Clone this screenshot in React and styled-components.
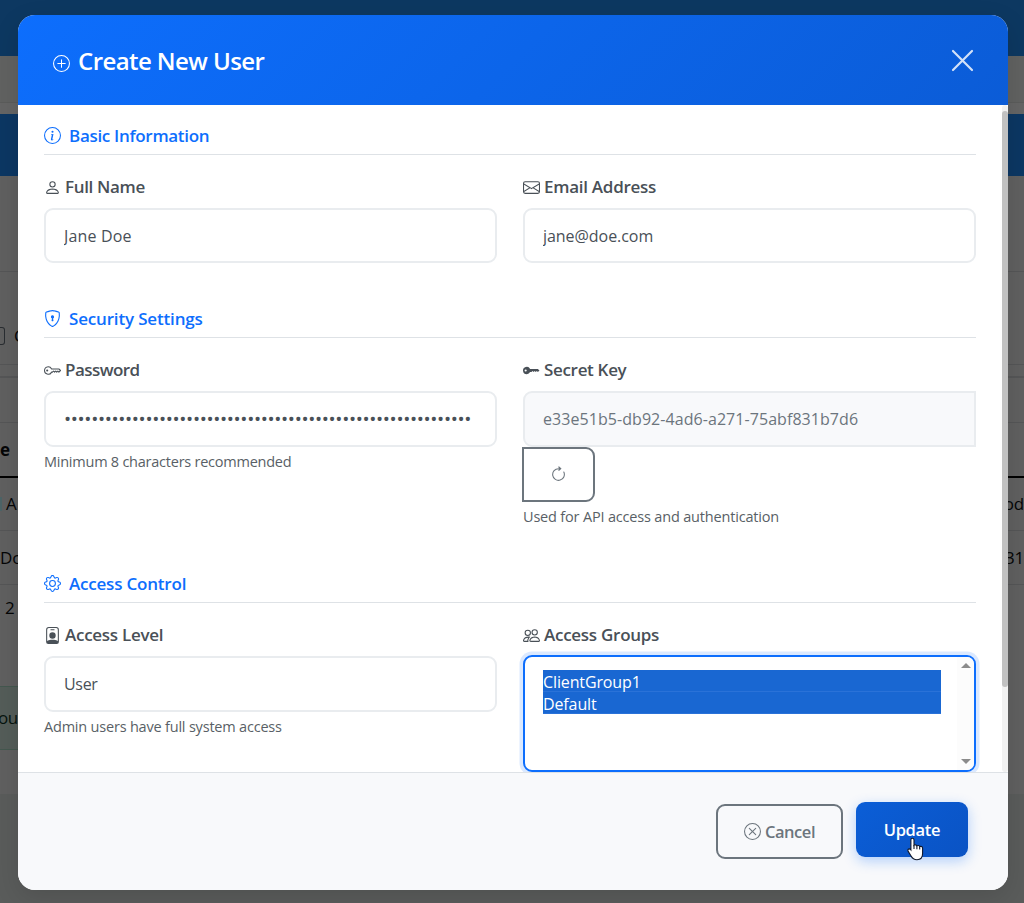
import React from "react";
import styled, { createGlobalStyle, css } from "styled-components";
import {
  BsArrowClockwise,
  BsEnvelope,
  BsGear,
  BsInfoCircle,
  BsKey,
  BsKeyFill,
  BsPeople,
  BsPerson,
  BsPersonBadge,
  BsPlusCircle,
  BsShieldLock,
  BsXCircle,
} from "react-icons/bs";

const GlobalStyle = createGlobalStyle`
  * { box-sizing: border-box; }
  body {
    margin: 0;
    overflow: hidden;
    font-family: "Open Sans", "Noto Sans", sans-serif;
    font-size: 16px;
    color: #495057;
  }
`;

const Screen = styled.div`
  position: relative;
  width: 1024px;
  height: 903px;
  overflow: hidden;
  background: #5a5c5b;
`;

const Page = styled.div`
  display: flex;
  flex-direction: column;
`;

const Band = styled.div`
  display: flex;
  justify-content: space-between;
  align-items: center;
  height: ${(p) => p.$h}px;
  padding-top: ${(p) => p.$drop || 0}px;
  padding-bottom: ${(p) => p.$lift || 0}px;
  background: ${(p) => p.$bg || "#606060"};
  border-bottom: ${(p) => p.$line || 0}px solid ${(p) => p.$lineColor || "#555657"};
  color: #050607;
  font-size: 17px;
  line-height: 22px;
  white-space: nowrap;
`;

const PageCell = styled.span`
  display: flex;
  justify-content: ${(p) => (p.$end ? "flex-end" : "flex-start")};
  width: 18px;
  padding-left: ${(p) => p.$indent || 0}px;
  font-weight: ${(p) => (p.$bold ? 700 : 400)};
  letter-spacing: -0.2px;
`;

const CheckCell = styled.span`
  display: flex;
  align-items: center;
  gap: 9px;
`;

const CheckEdge = styled.span`
  width: 5px;
  height: 18px;
  border: 1px solid #292d31;
  border-left: 0;
  border-radius: 0 3px 3px 0;
`;

const TagRow = styled.span`
  display: flex;
  align-items: center;
  gap: 4px;
`;

const TagEdge = styled.span`
  width: 2px;
  height: 14px;
  background: #4c6467;
`;

const Notice = styled.div`
  display: flex;
  align-items: center;
  width: 60px;
  height: 64px;
  border: solid #44584f;
  border-width: 1px 0;
  background: #545d59;
  color: #06140e;
  letter-spacing: -0.6px;
  text-indent: -2px;
`;

const Dialog = styled.div`
  position: absolute;
  left: 18px;
  top: 15px;
  display: flex;
  flex-direction: column;
  width: 990px;
  height: 875px;
  overflow: hidden;
  border-radius: 17px;
  background: #fff;
  box-shadow: 0 8px 26px rgba(0, 0, 0, 0.12);
`;

const Header = styled.header`
  display: flex;
  align-items: center;
  justify-content: space-between;
  flex: none;
  height: 90px;
  padding: 0 34px 0 35px;
  background: linear-gradient(135deg, #0d6efd 0%, #0b5cd7 100%);
  color: #fff;
`;

const Title = styled.h1`
  display: flex;
  align-items: center;
  gap: 8px;
  margin: 0;
  padding-top: 2px;
  font-size: 24px;
  line-height: 32px;
  font-weight: 600;
  letter-spacing: -0.58px;

  svg {
    width: 17px;
    height: 17px;
    margin-top: 5px;
  }
`;

const CloseButton = styled.button`
  display: flex;
  padding: 0;
  border: 0;
  background: none;
  color: #fff;
  opacity: 0.82;
`;

const Body = styled.div`
  display: flex;
  height: 667px;
  flex: none;
  overflow: hidden;
`;

const Form = styled.div`
  flex: 1;
  padding: 18px 26px 0;
`;

const ScrollTrack = styled.div`
  width: 6px;
  padding-top: 6px;
  border-radius: 4px;
  background: #f1f1f1;
`;

const ScrollThumb = styled.div`
  height: 576px;
  border-radius: 4px;
  background: #c1c1c1;
`;

const Section = styled.section`
  margin-bottom: 43px;
`;

const SectionTitle = styled.h2`
  display: flex;
  align-items: center;
  gap: 8px;
  height: 32px;
  margin: 0 0 20px;
  padding-bottom: 6px;
  border-bottom: 1px solid #dee2e6;
  color: #0d6efd;
  font-size: 17px;
  line-height: 24px;
  font-weight: 600;
  letter-spacing: ${(p) => p.$track || 0}px;

  svg {
    width: 17px;
    height: 17px;
  }
`;

const Columns = styled.div`
  display: grid;
  grid-template-columns: 1fr 1fr;
  gap: 26px;
`;

const Field = styled.div`
  display: flex;
  flex-direction: column;
  min-width: 0;
`;

const Label = styled.label`
  display: flex;
  align-items: center;
  gap: 4px;
  height: 24px;
  margin-bottom: 9px;
  font-size: 17px;
  line-height: 24px;
  font-weight: 600;
  white-space: nowrap;
  letter-spacing: ${(p) => p.$track || -0.27}px;

  svg {
    width: 17px;
    height: 17px;
  }
`;

const Input = styled.input`
  width: 100%;
  height: ${(p) => p.$h || 56}px;
  padding: 0 18px;
  border: 2px solid #e9ecef;
  border-radius: 9px;
  outline: none;
  background: #fff;
  color: #495057;
  font: 16px/24px "Open Sans", "Noto Sans", sans-serif;
  letter-spacing: ${(p) => p.$track || 0}px;

  &[type="password"] {
    font-size: 19px;
  }

  ${(p) =>
    p.$muted &&
    css`
      border-radius: 9px 0 0 9px;
      background: #f8f9fb;
      color: #6c757d;
    `}
`;

const Help = styled.small`
  margin-top: 4px;
  height: 22px;
  color: #595f66;
  font-size: 14.5px;
  line-height: 22px;
  white-space: nowrap;
  letter-spacing: ${(p) => p.$track || -0.2}px;
`;

const RefreshButton = styled.button`
  display: flex;
  align-items: center;
  justify-content: center;
  width: 73px;
  height: 55px;
  margin-left: -1px;
  padding: 0;
  border: 2px solid #6c757d;
  border-radius: 0 9px 9px 0;
  background: #fff;
  color: #6c757d;

  svg {
    width: 17px;
    height: 17px;
  }
`;

const ListBox = styled.div`
  display: flex;
  justify-content: space-between;
  height: 117px;
  margin-top: -1px;
  padding: 13px 0 0 18px;
  border: 2px solid #0d6efd;
  border-radius: 9px;
  background: #fff;
  box-shadow: 0 0 0 3.5px rgba(13, 110, 253, 0.15);
`;

const Options = styled.ul`
  width: 398px;
  margin: 0;
  padding: 0;
  list-style: none;
`;

const Option = styled.li`
  height: 22px;
  border-bottom: 1px solid #2a72d8;
  background: #1967d2;
  color: #fff;
  font-size: 16px;
  line-height: 24px;
  letter-spacing: -0.12px;
`;

const ListScroll = styled.div`
  display: flex;
  flex-direction: column;
  justify-content: space-between;
  align-items: center;
  width: 17px;
  margin-top: -13px;
  padding: 6px 0 6px 1px;
  border-radius: 0 7px 7px 0;
  background: #fcfcfc;
`;

const Arrow = styled.span`
  border: solid transparent;
  border-width: 0 5px;
  ${(p) => (p.$up ? "border-bottom: 5px solid #8b8b8b;" : "border-top: 5px solid #8b8b8b;")}
`;

const Footer = styled.footer`
  display: flex;
  flex: 1;
  justify-content: flex-end;
  align-items: flex-start;
  gap: 13px;
  padding: 31px 40px 0;
  border-top: 1px solid #dee2e6;
  background: #f8f9fb;
`;

const Button = styled.button`
  display: flex;
  align-items: center;
  justify-content: center;
  gap: 4px;
  width: 127px;
  height: 55px;
  padding: 0;
  border: 2px solid #6c757d;
  border-radius: 9px;
  background: transparent;
  color: #6c757d;
  font: 600 16.5px/24px "Open Sans", "Noto Sans", sans-serif;
  letter-spacing: -0.45px;

  svg {
    width: 17px;
    height: 17px;
  }

  ${(p) =>
    p.$primary &&
    css`
      width: 112px;
      margin-top: -2px;
      border: 0;
      background: linear-gradient(135deg, #0b5ed7 0%, #0a53c4 100%);
      box-shadow: 0 4px 13px rgba(13, 110, 253, 0.3);
      color: #fff;
      letter-spacing: -0.3px;
    `}
`;

const Cursor = styled.svg`
  position: absolute;
  left: 906px;
  top: 837px;
  width: 19px;
  height: 24px;
`;

export default function App() {
  return (
    <Screen>
      <GlobalStyle />
      <Page>
        <Band $h={56} $bg="#0d3861" />
        <Band $h={47} $bg="#616261" $line={1} $lineColor="#5b5c5b" />
        <Band $h={11} $bg="#656565" />
        <Band $h={62} $bg="#0c3763" />
        <Band $h={96} $line={1} />
        <Band $h={93} $line={1} $drop={35}>
          <CheckCell>
            <CheckEdge />
            <span>C</span>
          </CheckCell>
        </Band>
        <Band $h={13} $line={2} />
        <Band $h={45} $line={1} />
        <Band $h={55} $line={2} $lineColor="#000">
          <PageCell $bold>e</PageCell>
        </Band>
        <Band $h={53} $line={1}>
          <TagRow>
            <TagEdge />
            <span>A</span>
          </TagRow>
          <PageCell $end>od</PageCell>
        </Band>
        <Band $h={54} $line={1}>
          <PageCell>Do</PageCell>
          <PageCell $end>31</PageCell>
        </Band>
        <Band $h={101} $lift={55}>
          <PageCell $indent={5}>2</PageCell>
        </Band>
        <Band $h={64}>
          <Notice>our</Notice>
        </Band>
        <Band $h={44} />
      </Page>

      <Dialog>
        <Header>
          <Title>
            <BsPlusCircle />
            <span>Create New User</span>
          </Title>
          <CloseButton aria-label="Close">
            <svg width="23" height="23" viewBox="0 0 23 23" fill="none" stroke="currentColor" strokeWidth="2.2" strokeLinecap="round">
              <path d="M2 2l19 19M21 2l-19 19" />
            </svg>
          </CloseButton>
        </Header>

        <Body>
          <Form>
            <Section>
              <SectionTitle $track={-0.31}><BsInfoCircle /><span>Basic Information</span></SectionTitle>
              <Columns>
                <Field>
                  <Label $track={-0.33}><BsPerson /><span>Full Name</span></Label>
                  <Input $h={55} $track={0.15} defaultValue="Jane Doe" />
                </Field>
                <Field>
                  <Label><BsEnvelope /><span>Email Address</span></Label>
                  <Input $h={55} $track={-0.05} defaultValue="jane@doe.com" />
                </Field>
              </Columns>
            </Section>

            <Section>
              <SectionTitle $track={-0.17}><BsShieldLock /><span>Security Settings</span></SectionTitle>
              <Columns>
                <Field>
                  <Label $track={-0.55}><BsKey /><span>Password</span></Label>
                  <Input type="password" $track={-0.36} defaultValue={"x".repeat(60)} />
                  <Help $track={-0.24}>Minimum 8 characters recommended</Help>
                </Field>
                <Field>
                  <Label $track={-0.32}><BsKeyFill /><span>Secret Key</span></Label>
                  <Input $muted $track={0.06} readOnly value="e33e51b5-db92-4ad6-a271-75abf831b7d6" />
                  <RefreshButton aria-label="Regenerate"><BsArrowClockwise /></RefreshButton>
                  <Help $track={-0.18}>Used for API access and authentication</Help>
                </Field>
              </Columns>
            </Section>

            <Section>
              <SectionTitle $track={-0.2}><BsGear /><span>Access Control</span></SectionTitle>
              <Columns>
                <Field>
                  <Label><BsPersonBadge /><span>Access Level</span></Label>
                  <Input $track={-0.3} defaultValue="User" />
                  <Help>Admin users have full system access</Help>
                </Field>
                <Field>
                  <Label><BsPeople /><span>Access Groups</span></Label>
                  <ListBox>
                    <Options>
                      <Option>ClientGroup1</Option>
                      <Option>Default</Option>
                    </Options>
                    <ListScroll><Arrow $up /><Arrow /></ListScroll>
                  </ListBox>
                </Field>
              </Columns>
            </Section>
          </Form>
          <ScrollTrack><ScrollThumb /></ScrollTrack>
        </Body>

        <Footer>
          <Button><BsXCircle /><span>Cancel</span></Button>
          <Button $primary><span>Update</span></Button>
        </Footer>
      </Dialog>

      <Cursor viewBox="0 0 19 24">
        <path
          d="M6.2 1.3c1.1 0 1.8.8 1.8 1.8v5c.4-.5 2.500-.4 2.900.7.700-.600 2.500-.3 2.800.8.900-.5 2.900-.1 2.900 1.700v5.200c0 3.700-2.200 6.200-5.600 6.200-3 0-4.700-1.300-6.100-4L2.200 14.400c-.7-1.300-.2-2.400.8-2.500.8-.1 1.300.4 1.900 1.100V3.100c0-1 .5-1.800 1.300-1.800z"
          fill="#fff"
          stroke="#10182b"
          strokeWidth="1.1"
        />
        <path d="M8 8v4M10.900 9v3.200M13.700 9.800v2.700" stroke="#10182b" strokeWidth="1.1" />
      </Cursor>
    </Screen>
  );
}
